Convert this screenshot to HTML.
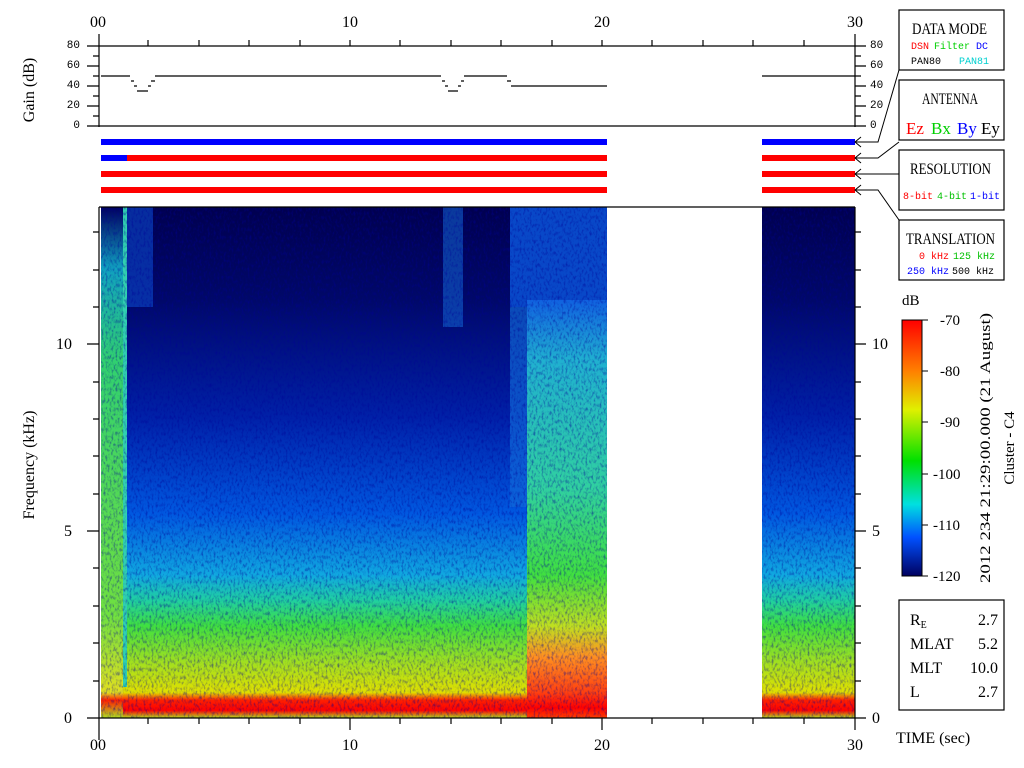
<!DOCTYPE html>
<html><head><meta charset="utf-8"><style>
html,body{margin:0;padding:0;background:#fff;}
svg{display:block;}
.m{font-family:"Liberation Mono","DejaVu Sans Mono",monospace;}
.s{font-family:"Liberation Serif",serif;}
</style></head><body>
<svg width="1024" height="768" viewBox="0 0 1024 768" xmlns="http://www.w3.org/2000/svg">
<defs>
<linearGradient id="g1" x1="0" y1="207" x2="0" y2="718" gradientUnits="userSpaceOnUse">
<stop offset="0" stop-color="#000050"/>
<stop offset="0.18" stop-color="#000868"/>
<stop offset="0.41" stop-color="#0020a8"/>
<stop offset="0.6" stop-color="#0058e0"/>
<stop offset="0.72" stop-color="#10a8e0"/>
<stop offset="0.77" stop-color="#20d0a0"/>
<stop offset="0.82" stop-color="#40e040"/>
<stop offset="0.89" stop-color="#a0e020"/>
<stop offset="0.95" stop-color="#e0e000"/>
<stop offset="0.965" stop-color="#ff2000"/>
<stop offset="0.985" stop-color="#ff0000"/>
<stop offset="1" stop-color="#b0e020"/>
</linearGradient>
<linearGradient id="g2" x1="0" y1="207" x2="0" y2="718" gradientUnits="userSpaceOnUse">
<stop offset="0" stop-color="#1050d0"/>
<stop offset="0.18" stop-color="#1060e0"/>
<stop offset="0.3" stop-color="#20b0d0"/>
<stop offset="0.55" stop-color="#30d0a0"/>
<stop offset="0.72" stop-color="#40e040"/>
<stop offset="0.82" stop-color="#c0e020"/>
<stop offset="0.88" stop-color="#ff9020"/>
<stop offset="0.95" stop-color="#ff4010"/>
<stop offset="0.98" stop-color="#ff0000"/>
<stop offset="1" stop-color="#ff4000"/>
</linearGradient>
<linearGradient id="g3" x1="0" y1="207" x2="0" y2="718" gradientUnits="userSpaceOnUse">
<stop offset="0" stop-color="#000060"/>
<stop offset="0.12" stop-color="#10a0c0"/>
<stop offset="0.3" stop-color="#30d070"/>
<stop offset="0.8" stop-color="#70e040"/>
<stop offset="0.95" stop-color="#e0e020"/>
<stop offset="0.965" stop-color="#ff2000"/>
<stop offset="1" stop-color="#b0e020"/>
</linearGradient>
<linearGradient id="cb" x1="0" y1="320" x2="0" y2="576" gradientUnits="userSpaceOnUse">
<stop offset="0" stop-color="#ff0000"/>
<stop offset="0.2" stop-color="#ff8000"/>
<stop offset="0.35" stop-color="#e0f000"/>
<stop offset="0.55" stop-color="#00e000"/>
<stop offset="0.72" stop-color="#00e0e0"/>
<stop offset="0.85" stop-color="#0050ff"/>
<stop offset="1" stop-color="#000060"/>
</linearGradient>
<filter id="nz" x="0" y="0" width="1" height="1">
<feTurbulence type="fractalNoise" baseFrequency="0.5 0.25" numOctaves="2" seed="3"/>
<feColorMatrix type="matrix" values="0 0 0 0 0  0 0 0 0 0  0 0 0 0 0.3  0 0 0 1.2 -0.55"/>
</filter>
</defs>

<g class="s" font-size="16" fill="#000" text-anchor="middle">
<text x="98" y="27">00</text><text x="350" y="27">10</text><text x="602" y="27">20</text><text x="855" y="27">30</text>
</g>

<g stroke="#000" stroke-width="1.2" fill="none">
<line x1="99" y1="34" x2="99" y2="127"/>
<line x1="87" y1="46" x2="866" y2="46"/>
<line x1="87" y1="126" x2="866" y2="126"/>
<line x1="855" y1="34" x2="855" y2="127"/>
<path d="M148 40V46M199 40V46M249 40V46M300 40V46M350 40V46M400 40V46M451 40V46M501 40V46M552 40V46M602 40V46M652 40V46M703 40V46M753 40V46M804 40V46"/>
<path d="M93 56H99M87 66H99M93 76H99M87 86H99M93 96H99M87 106H99M93 116H99"/>
<path d="M855 56H861M855 66H866M855 76H861M855 86H866M855 96H861M855 106H866M855 116H861"/>
<path d="M101 76H130M131 81H134M134 86H137M137 91H148M148 86H151M151 81H155M155 76H441M442 81H445M445 86H448M448 91H458M458 86H461M461 81H464M464 76H507M507 81H511M511 86H607"/>
<path d="M762 76H855"/>
</g>
<g class="m" font-size="11" fill="#000">
<text x="80" y="48" text-anchor="end">80</text><text x="80" y="68" text-anchor="end">60</text><text x="80" y="88" text-anchor="end">40</text><text x="80" y="108" text-anchor="end">20</text><text x="80" y="128" text-anchor="end">0</text>
<text x="870" y="48">80</text><text x="870" y="68">60</text><text x="870" y="88">40</text><text x="870" y="108">20</text><text x="870" y="128">0</text>
</g>
<text class="s" transform="translate(34,90) rotate(-90)" font-size="16" text-anchor="middle">Gain (dB)</text>

<rect x="101" y="139" width="506" height="6" fill="#0000ff"/>
<rect x="101" y="155" width="26" height="6" fill="#0000ff"/>
<rect x="127" y="155" width="480" height="6" fill="#ff0000"/>
<rect x="101" y="171" width="506" height="6" fill="#ff0000"/>
<rect x="101" y="187" width="506" height="6" fill="#ff0000"/>
<rect x="762" y="139" width="93" height="6" fill="#0000ff"/>
<rect x="762" y="155" width="93" height="6" fill="#ff0000"/>
<rect x="762" y="171" width="93" height="6" fill="#ff0000"/>
<rect x="762" y="187" width="93" height="6" fill="#ff0000"/>

<g stroke="#000" stroke-width="1" fill="none">
<path d="M899 70L878 142H855M861 137L855 142L861 147"/>
<path d="M899 142L878 158H855M861 153L855 158L861 163"/>
<path d="M899 174H855M861 169L855 174L861 179"/>
<path d="M899 220L878 190H855M861 185L855 190L861 195"/>
</g>

<rect x="101" y="207" width="506" height="511" fill="url(#g1)"/>
<rect x="101" y="207" width="22" height="511" fill="url(#g3)"/>
<rect x="123" y="207" width="4" height="480" fill="#30d0b0"/>
<rect x="127" y="207" width="26" height="100" fill="#0840c0" opacity="0.7"/>
<rect x="443" y="207" width="20" height="120" fill="#1060d0" opacity="0.6"/>
<rect x="510" y="207" width="97" height="100" fill="#0848c8"/>
<rect x="527" y="300" width="80" height="418" fill="url(#g2)"/>
<rect x="510" y="307" width="17" height="200" fill="#1068d8" opacity="0.7"/>
<rect x="762" y="207" width="93" height="511" fill="url(#g1)"/>
<rect x="101" y="207" width="506" height="511" filter="url(#nz)"/>
<rect x="762" y="207" width="93" height="511" filter="url(#nz)"/>

<g stroke="#000" stroke-width="1.2" fill="none">
<path d="M99 207H855M99 207V740M855 207V718M87 718H866M99 718V724"/>
<path d="M93 681H99M93 643H99M93 606H99M93 568H99M87 531H99M93 494H99M93 456H99M93 419H99M93 382H99M87 344H99M93 307H99M93 270H99M93 232H99"/>
<path d="M855 681H861M855 643H861M855 606H861M855 568H861M855 531H866M855 494H861M855 456H861M855 419H861M855 382H861M855 344H866M855 307H861M855 270H861M855 232H861"/>
<path d="M148 718V724M199 718V724M249 718V724M300 718V724M350 718V730M400 718V724M451 718V724M501 718V724M552 718V724M602 718V730M652 718V724M703 718V724M753 718V724M804 718V724M855 718V730"/>
</g>
<g class="s" font-size="16" fill="#000">
<text x="72" y="723" text-anchor="end">0</text><text x="72" y="536" text-anchor="end">5</text><text x="72" y="349" text-anchor="end">10</text>
<text x="872" y="723">0</text><text x="872" y="536">5</text><text x="872" y="349">10</text>
<text x="98" y="750" text-anchor="middle">00</text><text x="350" y="750" text-anchor="middle">10</text><text x="602" y="750" text-anchor="middle">20</text><text x="855" y="750" text-anchor="middle">30</text>
<text x="896" y="743">TIME (sec)</text>
</g>
<text class="s" transform="translate(34,465) rotate(-90)" font-size="16" text-anchor="middle">Frequency (kHz)</text>

<g stroke="#000" stroke-width="1.2" fill="#fff">
<rect x="899" y="10" width="105" height="60"/>
<rect x="899" y="80" width="105" height="60"/>
<rect x="899" y="150" width="105" height="60"/>
<rect x="899" y="220" width="105" height="60"/>
<rect x="899" y="600" width="105" height="110"/>
</g>
<g class="s" font-size="16" fill="#000">
<text x="912" y="34" textLength="75" lengthAdjust="spacingAndGlyphs">DATA MODE</text>
<text x="922" y="104" textLength="56" lengthAdjust="spacingAndGlyphs">ANTENNA</text>
<text x="910" y="174" textLength="81" lengthAdjust="spacingAndGlyphs">RESOLUTION</text>
<text x="906" y="244" textLength="89" lengthAdjust="spacingAndGlyphs">TRANSLATION</text>
</g>
<g class="m" font-size="10">
<text x="911" y="49" fill="#ff0000">DSN</text><text x="934" y="49" fill="#00d000">Filter</text><text x="976" y="49" fill="#0000ff">DC</text>
<text x="911" y="64" fill="#000">PAN80</text><text x="959" y="64" fill="#00d0d0">PAN81</text>
<text x="903" y="199" fill="#ff0000">8-bit</text><text x="937" y="199" fill="#00c000">4-bit</text><text x="970" y="199" fill="#0000ff">1-bit</text>
<text x="919" y="259" fill="#ff0000">0 kHz</text><text x="953" y="259" fill="#00c000">125 kHz</text>
<text x="907" y="274" fill="#0000ff">250 kHz</text><text x="952" y="274" fill="#000">500 kHz</text>
</g>
<g class="s" font-size="17">
<text x="906" y="134" fill="#ff0000">Ez</text><text x="931" y="134" fill="#00d000">Bx</text><text x="957" y="134" fill="#0000ff">By</text><text x="981" y="134" fill="#000">Ey</text>
</g>

<text x="902" y="305" class="s" font-size="15">dB</text>
<rect x="902" y="320" width="20" height="256" fill="url(#cb)" stroke="#000"/>
<g stroke="#000"><path d="M922 320H928M922 371H928M922 422H928M922 474H928M922 525H928M922 576H928"/></g>
<g class="s" font-size="15" fill="#000">
<text x="940" y="325">-70</text><text x="940" y="376">-80</text><text x="940" y="427">-90</text><text x="933" y="479">-100</text><text x="933" y="530">-110</text><text x="933" y="581">-120</text>
</g>
<text transform="translate(990,448) rotate(-90)" class="s" font-size="15" text-anchor="middle" textLength="270" lengthAdjust="spacingAndGlyphs">2012 234 21:29:00.000 (21 August)</text>
<text transform="translate(1014,448) rotate(-90)" class="s" font-size="15" text-anchor="middle">Cluster - C4</text>

<g class="s" font-size="16" fill="#000">
<text x="910" y="625">R<tspan font-size="10" dy="3">E</tspan></text><text x="998" y="625" text-anchor="end">2.7</text>
<text x="910" y="649">MLAT</text><text x="998" y="649" text-anchor="end">5.2</text>
<text x="910" y="673">MLT</text><text x="998" y="673" text-anchor="end">10.0</text>
<text x="910" y="697">L</text><text x="998" y="697" text-anchor="end">2.7</text>
</g>
</svg>
</body></html>
